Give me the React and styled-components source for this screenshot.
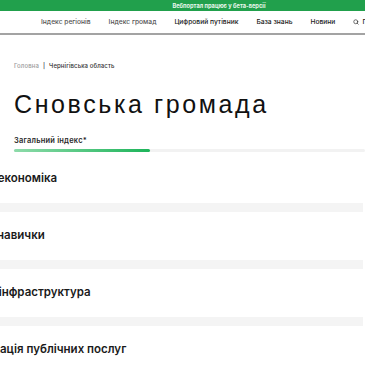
import React from "react";
import styled, { createGlobalStyle } from "styled-components";
import { Search } from "lucide-react";

const GlobalStyle = createGlobalStyle`
  html, body {
    margin: 0;
    padding: 0;
    background: #fff;
    overflow: hidden;
  }
  body {
    font-family: Inter, "Liberation Sans", Arial, sans-serif;
    color: #1a1a1a;
  }
`;

const navItems = [
  { label: "Індекс регіонів", muted: true },
  { label: "Індекс громад", muted: true },
  { label: "Цифровий путівник" },
  { label: "База знань" },
  { label: "Новини" },
];

const sections = [
  { title: "Цифрова економіка", shift: -57 },
  { title: "Цифрові навички", shift: -54 },
  { title: "Цифрова інфраструктура", shift: -56 },
  { title: "Цифровізація публічних послуг", shift: -54 },
];

function App() {
  return (
    <>
      <GlobalStyle />
      <Page>
        <Banner>Вебпортал працює у бета-версії</Banner>
        <Nav>
          {navItems.map((item) => (
            <NavLink key={item.label} $muted={item.muted}>
              {item.label}
            </NavLink>
          ))}
          <SearchLink>
            <Search size={6} strokeWidth={2.5} />
            Пошук
          </SearchLink>
        </Nav>

        <Main>
          <Crumbs>
            <CrumbLink>Головна</CrumbLink>
            <CrumbSep>|</CrumbSep>
            <CrumbCurrent>Чернігівська область</CrumbCurrent>
          </Crumbs>
          <Title>Сновська громада</Title>
          <IndexLabel>Загальний індекс*</IndexLabel>
          <Track>
            <Fill style={{ width: `${(136 / 351) * 100}%` }} />
          </Track>
        </Main>

        <List>
          {sections.map((s) => (
            <Row key={s.title}>
              <RowTitle $shift={s.shift}>{s.title}</RowTitle>
            </Row>
          ))}
        </List>
      </Page>
    </>
  );
}

const Page = styled.div`
  width: 438px;
`;

const Banner = styled.div`
  height: 11px;
  background: #21a04c;
  color: #e8f7ec;
  font-size: 5.7px;
  font-weight: 700;
  display: flex;
  align-items: center;
  justify-content: center;
`;

const Nav = styled.nav`
  height: 22px;
  border-bottom: 2px solid #a3a3a3;
  display: flex;
  align-items: center;
  gap: 18px;
  padding-left: 41px;
  white-space: nowrap;
`;

const NavLink = styled.span`
  font-size: 6.7px;
  font-weight: 500;
  color: ${(p) => (p.$muted ? "#555" : "#222")};
`;

const SearchLink = styled.span`
  display: flex;
  align-items: center;
  gap: 3px;
  font-size: 6.7px;
  font-weight: 500;
  color: #222;
`;

const Main = styled.div`
  padding: 0 0 0 14px;
  width: 351px;
`;

const Crumbs = styled.div`
  margin-top: 27px;
  display: flex;
  align-items: center;
  gap: 4px;
  font-size: 6px;
  font-weight: 500;
  letter-spacing: 0.1px;
  line-height: 8px;
`;

const CrumbLink = styled.span`
  color: #9a9a9a;
`;

const CrumbSep = styled.span`
  color: #333;
`;

const CrumbCurrent = styled.span`
  color: #333;
`;

const Title = styled.h1`
  margin: 22px 0 0;
  font-family: "Liberation Sans", Arial, sans-serif;
  font-size: 25px;
  line-height: 24px;
  font-weight: 400;
  letter-spacing: 2.6px;
  color: #111;
  white-space: nowrap;
`;

const IndexLabel = styled.div`
  margin-top: 20px;
  font-size: 7.5px;
  line-height: 9px;
  font-weight: 600;
  letter-spacing: 0.2px;
  color: #2a2a2a;
`;

const Track = styled.div`
  margin-top: 4px;
  height: 3px;
  background: #f2f2f2;
  border-radius: 2px;
`;

const Fill = styled.div`
  height: 100%;
  border-radius: 2px;
  background: linear-gradient(90deg, #8edbaa 0%, #1db45a 100%);
`;

const List = styled.div`
  margin-top: 3px;
  width: 363px;
  background: #f4f4f4;
  display: flex;
  flex-direction: column;
  gap: 9px;
`;

const Row = styled.div`
  height: 48px;
  background: #fff;
  display: flex;
  align-items: center;
  padding-bottom: 3px;
  box-sizing: border-box;
  overflow: hidden;
`;

const RowTitle = styled.span`
  margin-left: ${(p) => p.$shift}px;
  font-size: 11.5px;
  font-weight: 600;
  color: #1a1a1a;
  white-space: nowrap;
`;

export default App;
